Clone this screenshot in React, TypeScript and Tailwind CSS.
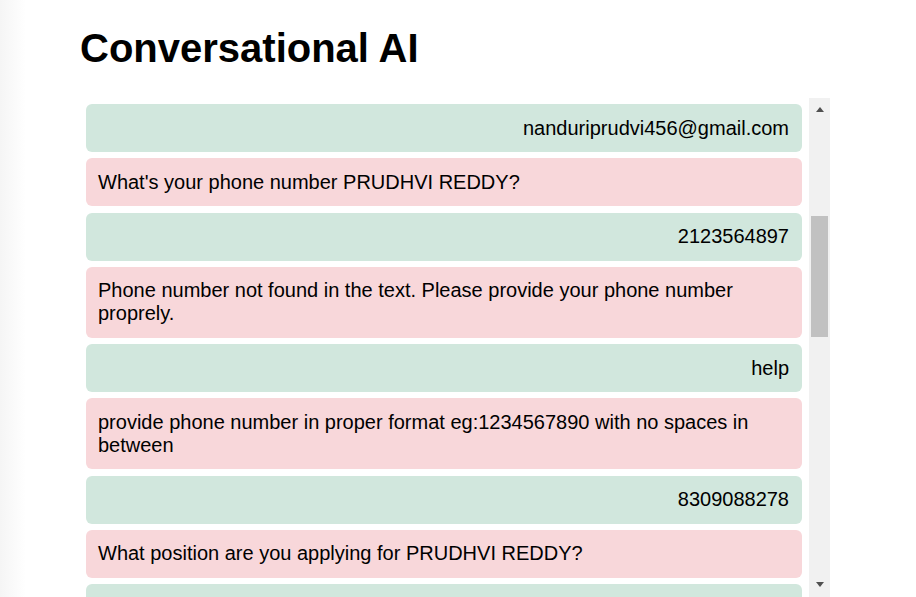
const messages = [
  { from: 'user', text: 'nanduriprudvi456@gmail.com' },
  { from: 'bot', text: "What's your phone number PRUDHVI REDDY?" },
  { from: 'user', text: '2123564897' },
  { from: 'bot', text: 'Phone number not found in the text. Please provide your phone number proprely.' },
  { from: 'user', text: 'help' },
  { from: 'bot', text: 'provide phone number in proper format eg:1234567890 with no spaces in between' },
  { from: 'user', text: '8309088278' },
  { from: 'bot', text: 'What position are you applying for PRUDHVI REDDY?' },
  { from: 'user', text: 'Software Engineer' },
]

export default function App() {
  return (
    <div className="flex h-[597px] overflow-hidden bg-white font-['Liberation_Sans',Arial,sans-serif] text-black">
      {/* faint shade on the left edge */}
      <div className="w-[26px] shrink-0 bg-gradient-to-r from-[#f5f5f5] to-white" />

      <div className="flex min-w-0 flex-1 flex-col pl-[54px]">
        <h1 className="pt-[25px] text-[40px] font-bold leading-[46px]">Conversational AI</h1>

        {/* chat window */}
        <div className="mt-[27px] flex h-[499px] w-[750px] overflow-hidden">
          <div className="flex flex-1 flex-col gap-[6.25px] overflow-hidden pl-[6px] pr-[7px] pt-[6px]">
            {messages.map((m, i) => (
              <div
                key={i}
                className={`shrink-0 rounded-[6px] py-[12.5px] pl-[12px] pr-[13px] text-[20px] leading-[23px] ${
                  m.from === 'user' ? 'bg-[#d1e7dd] text-right' : 'bg-[#f8d7da] text-left'
                }`}
              >
                {m.text}
              </div>
            ))}
          </div>

          {/* scrollbar */}
          <div className="flex w-[21px] shrink-0 flex-col items-center bg-[#f1f1f1]">
            <div className="mt-[9px] h-0 w-0 border-x-[4.5px] border-b-[5px] border-x-transparent border-b-[#505050]" />
            <div className="mt-[104px] h-[121px] w-[17px] bg-[#c1c1c1]" />
            <div className="mt-auto mb-[10px] h-0 w-0 border-x-[4.5px] border-t-[5px] border-x-transparent border-t-[#505050]" />
          </div>
        </div>
      </div>
    </div>
  )
}
